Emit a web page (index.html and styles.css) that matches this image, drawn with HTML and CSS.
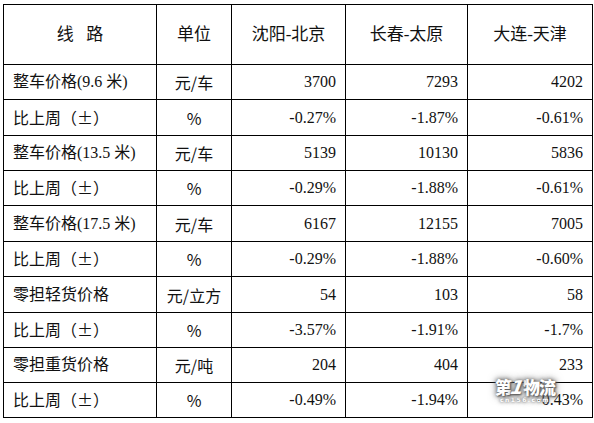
FILE: index.html
```html
<!DOCTYPE html>
<html lang="zh-CN">
<head>
<meta charset="utf-8">
<title>线路价格</title>
<link rel="stylesheet" href="styles.css">
</head>
<body>
<div class="page">
  <table class="price">
    <colgroup>
      <col class="c-route"><col class="c-unit"><col class="c-a"><col class="c-b"><col class="c-c">
    </colgroup>
    <thead>
      <tr class="head">
        <th class="h-route">线&nbsp;&nbsp;&nbsp;路</th>
        <th>单位</th>
        <th>沈阳-北京</th>
        <th>长春-太原</th>
        <th>大连-天津</th>
      </tr>
    </thead>
    <tbody>
      <tr class="r35"><td class="label">整车价格(9.6 米)</td><td class="unit">元/车</td><td class="num">3700</td><td class="num">7293</td><td class="num">4202</td></tr>
      <tr class="r36"><td class="label">比上周<span class="cjk">（±）</span></td><td class="unit">%</td><td class="num">-0.27%</td><td class="num">-1.87%</td><td class="num">-0.61%</td></tr>
      <tr class="r35"><td class="label">整车价格(13.5 米)</td><td class="unit">元/车</td><td class="num">5139</td><td class="num">10130</td><td class="num">5836</td></tr>
      <tr class="r35"><td class="label">比上周<span class="cjk">（±）</span></td><td class="unit">%</td><td class="num">-0.29%</td><td class="num">-1.88%</td><td class="num">-0.61%</td></tr>
      <tr class="r36"><td class="label">整车价格(17.5 米)</td><td class="unit">元/车</td><td class="num">6167</td><td class="num">12155</td><td class="num">7005</td></tr>
      <tr class="r35"><td class="label">比上周<span class="cjk">（±）</span></td><td class="unit">%</td><td class="num">-0.29%</td><td class="num">-1.88%</td><td class="num">-0.60%</td></tr>
      <tr class="r36"><td class="label">零担轻货价格</td><td class="unit">元/立方</td><td class="num">54</td><td class="num">103</td><td class="num">58</td></tr>
      <tr class="r35"><td class="label">比上周<span class="cjk">（±）</span></td><td class="unit">%</td><td class="num">-3.57%</td><td class="num">-1.91%</td><td class="num">-1.7%</td></tr>
      <tr class="r35"><td class="label">零担重货价格</td><td class="unit">元/吨</td><td class="num">204</td><td class="num">404</td><td class="num">233</td></tr>
      <tr class="r35"><td class="label">比上周<span class="cjk">（±）</span></td><td class="unit">%</td><td class="num">-0.49%</td><td class="num">-1.94%</td><td class="num">-0.43%</td></tr>
    </tbody>
  </table>
  <div class="watermark">
    <div class="wm-main">第<span class="wm-one">1</span>物流</div>
    <div class="wm-sub">cn156.com</div>
  </div>
</div>
</body>
</html>
```

FILE: styles.css
```css
html, body {
  margin: 0;
  padding: 0;
  background: #ffffff;
}
body {
  font-family: "Liberation Serif", "Noto Sans CJK SC", serif;
  color: #111111;
}
.page {
  position: relative;
  width: 594px;
  height: 423px;
  padding: 4px 0 0 3px;
  box-sizing: border-box;
}
.price {
  border-collapse: collapse;
  table-layout: fixed;
  width: 589px;
}
.c-route { width: 153px; }
.c-unit { width: 75px; }
.c-a { width: 114px; }
.c-b { width: 122px; }
.c-c { width: 125px; }
.price th, .price td {
  border: 1px solid #000000;
  padding: 0;
  font-size: 16px;
  line-height: 20px;
  white-space: nowrap;
  overflow: hidden;
}
.price th {
  font-weight: normal;
  text-align: center;
  font-size: 17px;
}
.head { height: 60px; }
.r35 { height: 35px; }
.r36 { height: 36px; }
.label {
  text-align: left;
  padding-left: 9px !important;
}
.cjk {
  font-family: "Noto Sans CJK SC", sans-serif;
}
.unit {
  text-align: center;
  font-family: "Noto Sans CJK SC", sans-serif;
}
.num {
  text-align: right;
  padding-right: 9px !important;
  font-size: 16px;
}
.watermark {
  position: absolute;
  left: 490px;
  top: 378px;
  width: 70px;
  text-align: center;
  color: #ffffff;
  font-family: "Noto Sans CJK SC", sans-serif;
}
.wm-main {
  font-size: 17px;
  font-weight: 900;
  line-height: 18px;
  letter-spacing: -1px;
  text-shadow: 0 0 4px #555555, 0 0 8px #777777, 1px 1px 2px #444444;
}
.wm-one {
  display: inline-block;
  font-style: italic;
  font-family: "DejaVu Sans", sans-serif;
  font-weight: bold;
  font-size: 19px;
  transform: skewX(-10deg);
}
.wm-sub {
  font-family: "DejaVu Sans", sans-serif;
  font-size: 6px;
  font-weight: bold;
  line-height: 7px;
  letter-spacing: 1.5px;
  text-shadow: 0 0 3px #555555, 0 0 5px #777777;
}
```
